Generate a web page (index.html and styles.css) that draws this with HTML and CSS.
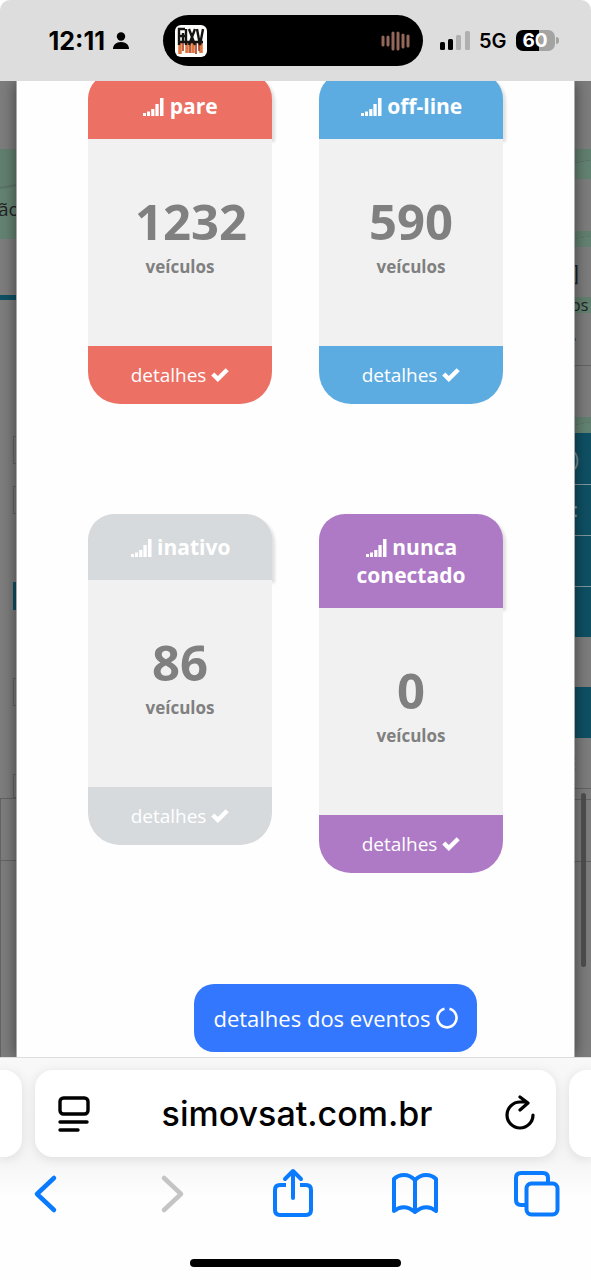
FILE: index.html
```html
<!DOCTYPE html>
<html lang="pt-BR">
<head>
<meta charset="utf-8">
<meta name="viewport" content="width=device-width, initial-scale=1">
<title>simovsat.com.br</title>
<link rel="stylesheet" href="styles.css">
</head>
<body>
<svg class="sprite" aria-hidden="true">
  <symbol id="signal" viewBox="0 0 22 18"><path fill="currentColor" d="M1 15h3v3H1zM5 13.500h3V18H5zM9.200 11h3.200v7H9.200zM13.400 6h3.300v12h-3.300zM18 0h3.500v18H18z"/></symbol>
  <symbol id="check" viewBox="0 0 18 14"><path fill="none" stroke="currentColor" stroke-width="4.400" d="M1.800 6l5 5L16.200 1.800"/></symbol>
</svg>
<div class="phone">
  <header class="status">
    <div class="status-left">
      <span class="clock">12:11</span>
      <svg width="16" height="18" viewBox="0 0 16 18" aria-hidden="true"><circle cx="8" cy="4.500" r="4.200"/><path d="M0 17c0-4 3-7 8-7s8 3 8 7z"/></svg>
    </div>
    <div class="island">
      <svg width="32" height="32" viewBox="0 0 32 32" aria-hidden="true">
        <rect width="32" height="32" rx="6" fill="#fff"/>
        <path stroke="#e0773c" stroke-width="3.500" d="M5 17v12M12 17v11M18 17v11M26 17v11"/>
        <path stroke="#9b2f18" stroke-width="1.500" d="M8 18v8M15 18v10M21 17v12M24 18v8"/>
        <path fill="none" stroke="#171310" stroke-width="2.400" d="M4 20V4h6M4 11h6M11 4v16M14 4l6 16M20 4l-6 16M22 4l3 16 3-16M3 17h25M8 8v10M17 8v9"/>
      </svg>
      <svg width="30" height="20" viewBox="0 0 30 20" aria-hidden="true"><path stroke="#93685a" stroke-width="3" stroke-linecap="round" d="M2 6v8M7 6v8M12 2v16M17 2v16M22 4v12M27 5v10"/></svg>
    </div>
    <div class="status-right">
      <svg width="30" height="19" viewBox="0 0 30 19" aria-hidden="true"><rect y="11" width="5" height="8" rx="1.500"/><rect x="8" y="8" width="5" height="11" rx="1.500"/><g fill="#b0b0b0"><rect x="16" y="4" width="5" height="15" rx="1.500"/><rect x="25" width="5" height="19" rx="1.500"/></g></svg>
      <span class="network">5G</span>
      <span class="battery">60</span>
    </div>
  </header>

  <main class="viewport">
    <div class="behind behind-left" aria-hidden="true">
      <i class="gap h68"></i>
      <i class="map h90"><b class="place">ão</b></i>
      <i class="gap h56"></i>
      <i class="teal h5"></i>
      <i class="gap h136"></i>
      <i class="field h28"></i>
      <i class="gap h22"></i>
      <i class="field h28"></i>
      <i class="gap h68"></i>
      <i class="teal tab h28"></i>
      <i class="gap h68"></i>
      <i class="field h28"></i>
      <i class="gap h68"></i>
      <i class="field h24"></i>
      <i class="frame h62"></i>
      <i class="frame rest"></i>
    </div>

    <section class="modal">
      <div class="cards">
        <article class="card red">
          <h2 class="card-title"><svg class="signal"><use href="#signal"/></svg> pare</h2>
          <div class="card-body"><strong class="count">1232</strong><span class="unit">veículos</span></div>
          <button class="card-more" type="button">detalhes <svg class="check"><use href="#check"/></svg></button>
        </article>
        <article class="card blue">
          <h2 class="card-title"><svg class="signal"><use href="#signal"/></svg> off-line</h2>
          <div class="card-body"><strong class="count">590</strong><span class="unit">veículos</span></div>
          <button class="card-more" type="button">detalhes <svg class="check"><use href="#check"/></svg></button>
        </article>
        <article class="card gray">
          <h2 class="card-title"><svg class="signal"><use href="#signal"/></svg> inativo</h2>
          <div class="card-body"><strong class="count">86</strong><span class="unit">veículos</span></div>
          <button class="card-more" type="button">detalhes <svg class="check"><use href="#check"/></svg></button>
        </article>
        <article class="card purple">
          <h2 class="card-title"><svg class="signal"><use href="#signal"/></svg> nunca conectado</h2>
          <div class="card-body"><strong class="count">0</strong><span class="unit">veículos</span></div>
          <button class="card-more" type="button">detalhes <svg class="check"><use href="#check"/></svg></button>
        </article>
      </div>
      <div class="actions">
        <button class="events" type="button">detalhes dos eventos
          <svg width="22" height="22" viewBox="0 0 22 22" aria-hidden="true"><path fill="none" stroke="currentColor" stroke-width="2.600" d="M8.500 1.700a9.500 9.500 0 1 0 5 0"/></svg>
        </button>
      </div>
    </section>

    <div class="behind behind-right" aria-hidden="true">
      <i class="gap h68"></i>
      <i class="map h30"></i>
      <i class="gap h52"></i>
      <i class="map h16"></i>
      <i class="gap h50"><b class="bracket">]</b></i>
      <i class="map h16"><b class="cut">os</b></i>
      <i class="gap h52"><b class="dot">·</b></i>
      <i class="frame h52"></i>
      <i class="map h16"></i>
      <i class="teal h51"><b class="paren">)</b></i>
      <i class="teal item h51"><b class="paren">:</b></i>
      <i class="teal item h51"></i>
      <i class="teal item h51"></i>
      <i class="gap h50"></i>
      <i class="teal h51"></i>
      <i class="gap h50"><b class="more">⋮</b></i>
      <i class="frame h11"></i>
      <i class="frame h62"></i>
      <i class="frame rest"></i>
    </div>
    <span class="scrollbar"></span>
  </main>

  <footer class="browser">
    <div class="tabs-row">
      <span class="tab-edge left"></span>
      <div class="address">
        <button class="icon" type="button" aria-label="Menu da página"><svg width="32" height="36" viewBox="0 0 32 36" fill="none" stroke="#000" stroke-width="3.400" stroke-linecap="round"><rect x="2" y="2" width="28" height="16" rx="3.500"/><path d="M2 26h27M2 34h18"/></svg></button>
        <button class="url" type="button">simovsat.com.br</button>
        <button class="icon" type="button" aria-label="Recarregar"><svg width="32" height="38" viewBox="0 0 32 38" fill="none" stroke="#000" stroke-width="3.200" stroke-linecap="round" stroke-linejoin="round"><path d="M29 20A13 13 0 1 1 16 7h7M16 2l8 6-8 7"/></svg></button>
      </div>
      <span class="tab-edge right"></span>
    </div>
    <nav class="tools">
      <button class="tool" type="button" aria-label="Voltar"><svg viewBox="0 0 48 48"><path stroke-width="4.500" d="M33 8L16 24l17 16"/></svg></button>
      <button class="tool off" type="button" aria-label="Avançar" disabled><svg viewBox="0 0 48 48"><path stroke-width="4.500" d="M20 8l17 16-17 16"/></svg></button>
      <button class="tool" type="button" aria-label="Compartilhar"><svg viewBox="0 0 48 48"><path d="M19 15h-6q-5 0-5 5v20q0 5 5 5h26q5 0 5-5V20q0-5-5-5h-6" stroke-linecap="butt"/><path d="M26 28V2M18 9l8-8 8 8"/></svg></button>
      <button class="tool" type="button" aria-label="Favoritos"><svg viewBox="0 0 48 48"><path d="M25 10Q20 5 14 5 8 5 4 9v32q10-8 21 1 11-9 21-1V9q-4-4-10-4-6 0-11 5v32"/></svg></button>
      <button class="tool" type="button" aria-label="Abas"><svg viewBox="0 0 48 48"><path d="M13 35H8q-5 0-5-5V8q0-5 5-5h22q5 0 5 5v5" stroke-linecap="butt"/><rect x="13.500" y="13.500" width="31" height="31" rx="5"/></svg></button>
    </nav>
    <span class="home"></span>
  </footer>
</div>
</body>
</html>
```
FILE: styles.css
```css
* { box-sizing: border-box; }
body { margin: 0; background: #fff; font-family: "Open Sans", "Noto Sans", sans-serif; }
button { border: 0; padding: 0; background: none; font: inherit; color: inherit; }
svg { flex: none; overflow: visible; }
.sprite { display: none; }
.phone { display: flex; flex-direction: column; height: 100vh; overflow: hidden; }

/* status bar */
.status {
  flex: none; display: grid; grid-template-columns: 163fr 260px 168fr; align-items: center;
  height: 81px; background: #ddd; border-radius: 10px 10px 0 0;
  font-family: Inter, "Liberation Sans", sans-serif; font-weight: 600;
}
.status-left { display: flex; align-items: center; justify-content: flex-end; gap: 8px; padding-right: 34px; }
.clock { font-size: 25px; line-height: 28px; font-weight: 700; }
.island {
  display: flex; align-items: center; justify-content: space-between;
  height: 51px; padding: 0 12px; border-radius: 26px; background: #000;
}
.status-right { display: flex; align-items: center; gap: 9px; padding-left: 17px; }
.network { font-size: 20px; line-height: 24px; }
.battery {
  position: relative; width: 39px; height: 21px; border-radius: 7px; text-align: center;
  font-size: 19px; line-height: 21px; font-weight: 700; color: #fff;
  background: linear-gradient(90deg, #000 60%, #a3a3a3 60%);
}
.battery::after {
  content: ""; position: absolute; right: -4px; top: 7px; width: 3px; height: 7px;
  border-radius: 0 3px 3px 0; background: #a3a3a3;
}

/* page behind the modal */
.viewport {
  position: relative; flex: 1; min-height: 0; display: grid;
  grid-template-columns: 16px 1fr 16px; overflow: hidden; background: #7d7d7d;
}
.behind { display: flex; flex-direction: column; min-width: 0; overflow: hidden; }
.behind i { flex: none; display: flex; align-items: center; overflow: hidden; font-style: normal; }
.behind b { font-weight: 500; color: #222; white-space: nowrap; }
.behind .rest { flex: 1; }
.map { background: linear-gradient(170deg, #62806f 40%, #587068 42%, #648372 44%); }
.teal { background: #0f5064; }
.item { border-top: 1px solid #81979e; }
.field { margin-left: 13px; border: 1px solid #666; border-right: 0; }
.tab { margin-left: 13px; }
.frame { border-top: 1px solid #636363; }
.behind-left .frame { border-left: 1px solid #636363; }
.place { margin-left: -2px; margin-top: 30px; font-size: 19px; line-height: 24px; }
.more { margin-left: -9px; font-size: 16px; line-height: 20px; }
.bracket { margin-left: -3px; font-size: 22px; line-height: 24px; }
.cut { margin-left: -4px; font-size: 16px; line-height: 16px; }
.dot { margin-left: -4px; font-size: 24px; line-height: 24px; }
.behind .paren { font-size: 20px; line-height: 24px; margin-left: -2px; color: #81979e; }
.h5 { height: 5px; } .h11 { height: 11px; } .h16 { height: 16px; } .h22 { height: 22px; }
.h24 { height: 24px; } .h28 { height: 28px; } .h30 { height: 30px; } .h50 { height: 50px; }
.h51 { height: 51px; } .h52 { height: 52px; } .h56 { height: 56px; } .h62 { height: 62px; }
.h68 { height: 68px; } .h90 { height: 90px; } .h136 { height: 136px; }
.scrollbar {
  position: absolute; right: 5px; top: 712px; width: 5px; height: 174px;
  border-radius: 3px; background: #4a4a4a;
}

/* modal */
.modal {
  position: relative; min-width: 0; padding: 0 71px; background: #fefefe;
  border: solid #aaa; border-width: 0 1px; box-shadow: 0 0 14px rgba(0, 0, 0, .5);
}
.cards {
  display: grid; grid-template-columns: 1fr 1fr; gap: 110px 47px; align-items: start;
  margin-top: -8px;
}
.card { display: flex; flex-direction: column; min-width: 0; color: #fff; }
.card-title {
  margin: 0; padding: 19px 30px; border-radius: 26px 26px 0 0; background: var(--tone);
  box-shadow: 3px 3px 3px rgba(0, 0, 0, .12);
  font-size: 21px; line-height: 28px; font-weight: 700; text-align: center;
}
.card-body {
  position: relative; display: flex; flex-direction: column; align-items: center;
  height: 207px; padding-top: 48px; background: #f1f1f1; color: #808080;
}
.count { width: 90px; font-size: 49px; line-height: 68px; font-weight: 700; text-align: center; }
.unit { font-size: 17px; line-height: 24px; font-weight: 700; }
.card-more {
  height: 58px; border-radius: 0 0 32px 32px; background: var(--tone);
  font-size: 19px; line-height: 28px; text-align: center; font-weight: 400;
}
.signal { width: 22px; height: 18px; vertical-align: -2px; }
.check { width: 18px; height: 14px; }
.red { --tone: #ec7064; }
.blue { --tone: #5dace1; }
.gray { --tone: #d6dadd; }
.purple { --tone: #ae79c5; }
.actions { display: flex; justify-content: center; padding: 111px 0 0 80px; }
.events {
  flex: none; display: flex; align-items: center; gap: 5px; height: 68px; padding: 0 19px;
  border-radius: 20px; background: #3377ff; color: #fff;
  font-size: 22px; line-height: 30px; font-weight: 400; white-space: nowrap;
}

/* browser controls */
.browser {
  position: relative; flex: none; display: flex; flex-direction: column; align-items: stretch;
  height: 223px; padding-top: 12px; border-top: 1px solid #ddd;
  background: linear-gradient(#f8f8f8, #f5f5f5 100px, #fefefe 140px);
}
.tabs-row { display: grid; grid-template-columns: 22px 1fr 22px; gap: 13px; height: 87px; }
.tab-edge, .address { background: #fff; box-shadow: 0 2px 12px rgba(0, 0, 0, .1); }
.left { border-radius: 0 18px 18px 0; }
.right { border-radius: 18px 0 0 18px; }
.address {
  display: flex; align-items: center; justify-content: space-between; padding: 0 20px 0 23px;
  border-radius: 18px; min-width: 0;
}
.icon { display: flex; }
.url { font-family: Inter, "Liberation Sans", sans-serif; font-size: 34px; line-height: 44px; font-weight: 500; color: #000; }
.tools { display: flex; justify-content: space-between; padding: 13px 30px 0 21px; }
.tool { display: flex; color: #0a7aff; }
.tool svg {
  width: 48px; height: 48px; fill: none; stroke: currentColor; stroke-width: 4;
  stroke-linecap: round; stroke-linejoin: round;
}
.off { color: #c4c4c4; }
.home { align-self: center; width: 211px; height: 8px; margin-top: 41px; border-radius: 4px; background: #000; }
```
